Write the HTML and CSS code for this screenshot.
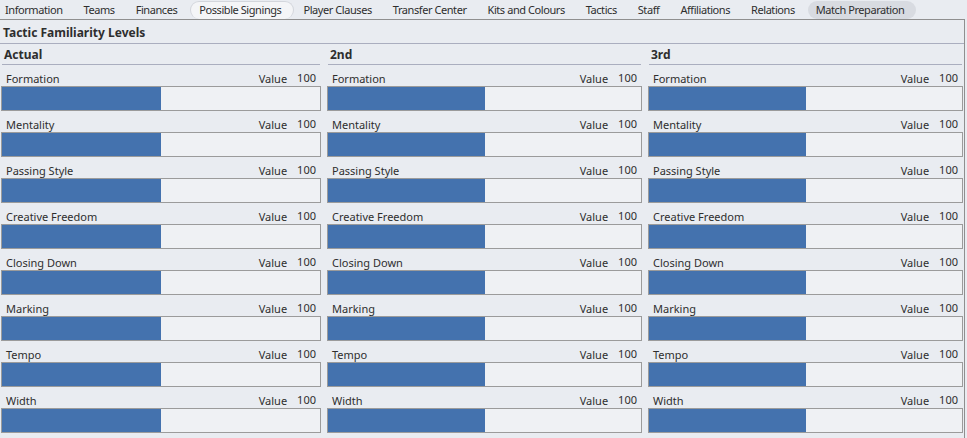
FILE: index.html
```html
<!DOCTYPE html>
<html>
<head>
<meta charset="utf-8">
<link rel="stylesheet" href="styles.css">
</head>
<body>
<nav class="tabs">
  <span class="tab">Information</span>
  <span class="tab">Teams</span>
  <span class="tab">Finances</span>
  <span class="tab tab-pill tab-light">Possible Signings</span>
  <span class="tab">Player Clauses</span>
  <span class="tab">Transfer Center</span>
  <span class="tab">Kits and Colours</span>
  <span class="tab">Tactics</span>
  <span class="tab">Staff</span>
  <span class="tab">Affiliations</span>
  <span class="tab">Relations</span>
  <span class="tab tab-pill tab-dark">Match Preparation</span>
</nav>
<section class="panel">
  <h1 class="title">Tactic Familiarity Levels</h1>
  <div class="columns" id="columns"></div>
</section>
<script src="app.js"></script>
</body>
</html>
```

FILE: app.js
```js
const heads = ["Actual", "2nd", "3rd"];
const rows = ["Formation", "Mentality", "Passing Style", "Creative Freedom", "Closing Down", "Marking", "Tempo", "Width"];
const wrap = document.getElementById("columns");
heads.forEach(h => {
  const col = document.createElement("div");
  col.className = "col";
  let html = '<div class="col-head">' + h + '</div>';
  rows.forEach(r => {
    html += '<div class="row"><div class="row-top"><span class="lbl">' + r + '</span>' +
      '<span class="val">Value</span><span class="num">100</span></div>' +
      '<div class="bar"><div class="fill" style="width:50%"></div></div></div>';
  });
  col.innerHTML = html;
  wrap.appendChild(col);
});
```

FILE: styles.css
```css
* { box-sizing: border-box; }
html, body { margin: 0; padding: 0; }
body {
  background: #e9ecf1;
  font-family: "Noto Sans", "Open Sans", sans-serif;
  font-size: 11px;
  color: #2e2e2e;
  width: 967px;
  height: 438px;
  overflow: hidden;
}
.tabs {
  display: flex;
  height: 19px;
  padding-left: 5px;
}
.tab {
  height: 18px;
  margin-top: 1px;
  line-height: 17px;
  margin-right: 21px;
  white-space: nowrap;
  border-radius: 9px;
  letter-spacing: -0.43px;
}
.tab-pill {
  padding: 0 12px 0 8px;
  margin-left: -8px;
  margin-right: 9px;
}
.tab-light {
  background: #f4f5f7;
  border: 1px solid #d3d6dc;
  border-bottom: none;
  line-height: 16px;
}
.tab-dark {
  background: #d8dbe1;
}
.panel {
  width: 965px;
  border-top: 1px solid #8f8f8f;
  border-right: 1px solid #8f8f8f;
  padding-left: 1px;
  height: 419px;
}
.title {
  margin: 0 -1px 0 -1px;
  width: 964px;
  font-size: 12px;
  font-weight: bold;
  height: 24px;
  line-height: 20px;
  padding: 3px 0 0 3px;
  border-bottom: 1px solid #aaaebf;
}
.columns {
  display: grid;
  grid-template-columns: 320px 315px 315px;
  column-gap: 6px;
}
.col-head {
  margin: 0 1px;
  height: 21px;
  line-height: 18px;
  padding: 2px 0 0 2px;
  font-size: 12px;
  font-weight: bold;
  border-bottom: 1px solid #aaaebf;
}
.row-top {
  display: flex;
  align-items: flex-end;
  height: 21px;
  padding: 0 5px 0 5px;
  line-height: 14px;
}
.lbl { flex: 1; }
.val { margin-right: 10px; }
.num { padding-bottom: 1px; }
.bar {
  height: 25px;
  border: 1px solid #9b9b9b;
  background: #eff1f4;
}
.fill {
  height: 100%;
  background: #4472ae;
}
```
